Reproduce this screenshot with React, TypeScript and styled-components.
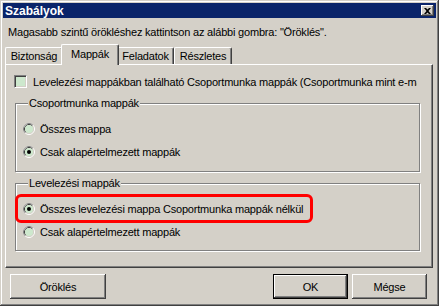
import React from "react";
import styled, { createGlobalStyle } from "styled-components";

const FACE = "#d4d0c8";
const SHADOW = "#808080";
const DARK = "#404040";
const WELL = "#cde8cd";

const Global = createGlobalStyle`
  html, body {
    margin: 0;
    padding: 0;
    background: ${FACE};
  }
  body {
    font-family: "Liberation Sans", Arial, sans-serif;
    font-size: 11px;
    letter-spacing: -0.2px;
    color: #000;
  }
`;

const Window = styled.div`
  box-sizing: border-box;
  width: 439px;
  height: 306px;
  padding: 3px;
  display: flex;
  flex-direction: column;
  background: ${FACE};
  box-shadow: inset -1px -1px ${DARK}, inset 1px 1px ${FACE},
    inset -2px -2px ${SHADOW}, inset 2px 2px #fff;
`;

const TitleBar = styled.div`
  height: 15px;
  display: flex;
  align-items: center;
  justify-content: space-between;
  padding: 0 2px;
  background: #0a246a;
  color: #fff;
  font-weight: bold;
  font-size: 12px;
  letter-spacing: 0;
`;

const CloseButton = styled.div`
  box-sizing: border-box;
  width: 13px;
  height: 11px;
  display: flex;
  align-items: center;
  justify-content: center;
  background: ${FACE};
  box-shadow: inset -1px -1px ${DARK}, inset 1px 1px #fff,
    inset -2px -2px ${SHADOW};
`;

const Body = styled.div`
  flex: 1;
  display: flex;
  flex-direction: column;
  padding: 0 3px 0 2px;
`;

const Hint = styled.div`
  margin: 8px 0 0 3px;
  line-height: 13px;
  white-space: nowrap;
`;

const TabStrip = styled.div`
  margin-top: 4px;
  height: 21px;
  display: flex;
  align-items: flex-end;
`;

const Tab = styled.div<{ $active?: boolean; $w: number }>`
  box-sizing: border-box;
  position: relative;
  width: ${(p) => p.$w}px;
  height: ${(p) => (p.$active ? 21 : 17)}px;
  margin: 0 ${(p) => (p.$active ? -2 : 0)}px ${(p) => (p.$active ? -1 : 0)}px;
  padding-top: ${(p) => (p.$active ? 3 : 2)}px;
  text-align: center;
  background: ${FACE};
  z-index: ${(p) => (p.$active ? 1 : 0)};
  border-radius: 2px 2px 0 0;
  border-top: 1px solid #fff;
  border-left: 1px solid #fff;
  border-right: 1px solid ${DARK};
  box-shadow: inset -1px 0 ${SHADOW};
`;

const Panel = styled.div`
  box-sizing: border-box;
  height: 204px;
  display: flex;
  flex-direction: column;
  padding: 10px 0 0 8px;
  border-top: 1px solid #fff;
  border-left: 1px solid #fff;
  border-right: 1px solid ${DARK};
  border-bottom: 1px solid ${DARK};
  box-shadow: inset -1px -1px ${SHADOW};
`;

const CheckRow = styled.label`
  display: flex;
  align-items: center;
  gap: 6px;
  height: 13px;
  width: 403px;
  white-space: nowrap;
  overflow: hidden;
`;

const CheckBox = styled.span`
  box-sizing: border-box;
  flex: none;
  width: 13px;
  height: 13px;
  background: ${WELL};
  border-top: 1px solid ${SHADOW};
  border-left: 1px solid ${SHADOW};
  border-bottom: 1px solid #fff;
  border-right: 1px solid #fff;
  box-shadow: inset 1px 1px ${DARK}, inset -1px -1px ${FACE};
`;

const Group = styled.fieldset<{ $top: number; $h: number }>`
  box-sizing: border-box;
  margin: ${(p) => p.$top}px 0 0 1px;
  width: 405px;
  height: ${(p) => p.$h}px;
  padding: 12px 0 0 7px;
  border: 1px solid ${SHADOW};
  box-shadow: inset 1px 1px #fff, 1px 1px #fff;
  display: flex;
  flex-direction: column;
  gap: 10px;
  min-width: 0;
`;

const Legend = styled.legend`
  margin-left: 5px;
  padding: 0 1px;
  line-height: 13px;
  background: ${FACE};
`;

const RadioRow = styled.label`
  position: relative;
  display: flex;
  align-items: center;
  gap: 5px;
  height: 13px;
  white-space: nowrap;
`;

const Highlight = styled.span`
  position: absolute;
  left: -8px;
  top: -8px;
  width: 298px;
  height: 29px;
  box-sizing: border-box;
  border: 3px solid #ff0000;
  border-radius: 6px;
  pointer-events: none;
`;

const Footer = styled.div`
  display: flex;
  align-items: center;
  padding: 6px 0 0 5px;
  gap: 4px;
`;

const Button = styled.button<{ $w: number; $default?: boolean }>`
  box-sizing: border-box;
  width: ${(p) => p.$w}px;
  height: 25px;
  padding: 0;
  font: inherit;
  letter-spacing: inherit;
  color: #000;
  background: ${FACE};
  border: ${(p) => (p.$default ? "1px solid #000" : "none")};
  box-shadow: ${(p) =>
    p.$default
      ? `inset -1px -1px ${DARK}, inset 1px 1px #fff, inset -2px -2px ${SHADOW}`
      : `inset -1px -1px ${DARK}, inset 1px 1px #fff, inset -2px -2px ${SHADOW}, inset 2px 2px ${FACE}`};
`;

const Spacer = styled.div`
  flex: 1;
`;

const Radio = ({ checked }: { checked?: boolean }) => (
  <svg width="12" height="12" viewBox="0 0 12 12" style={{ flex: "none" }}>
    <circle cx="6" cy="6" r="5.5" fill="none" stroke="#fff" />
    <path d="M2.11 9.89 A5.5 5.5 0 0 1 9.89 2.11" fill="none" stroke={SHADOW} />
    <circle cx="6" cy="6" r="4.5" fill="none" stroke={FACE} />
    <path d="M2.82 9.18 A4.5 4.5 0 0 1 9.18 2.82" fill="none" stroke={DARK} />
    <circle cx="6" cy="6" r="4" fill={WELL} />
    {checked && <circle cx="6" cy="6" r="2" fill="#000" />}
  </svg>
);

const CloseGlyph = () => (
  <svg width="7" height="6" viewBox="0 0 7 6">
    <path d="M0 0h2l1.5 1.5L5 0h2L4.5 3 7 6H5L3.5 4.5 2 6H0l2.5-3z" fill="#000" />
  </svg>
);

export default function App() {
  return (
    <>
      <Global />
      <Window>
        <TitleBar>
          <span>Szabályok</span>
          <CloseButton>
            <CloseGlyph />
          </CloseButton>
        </TitleBar>
        <Body>
          <Hint>Magasabb szintű örökléshez kattintson az alábbi gombra: "Öröklés".</Hint>
          <TabStrip>
            <Tab $w={58}>Biztonság</Tab>
            <Tab $w={58} $active>
              Mappák
            </Tab>
            <Tab $w={57}>Feladatok</Tab>
            <Tab $w={58}>Részletes</Tab>
          </TabStrip>
          <Panel>
            <CheckRow>
              <CheckBox />
              Levelezési mappákban található Csoportmunka mappák (Csoportmunka mint e-mail)
            </CheckRow>
            <Group $top={9} $h={75}>
              <Legend>Csoportmunka mappák</Legend>
              <RadioRow>
                <Radio />
                Összes mappa
              </RadioRow>
              <RadioRow>
                <Radio checked />
                Csak alapértelmezett mappák
              </RadioRow>
            </Group>
            <Group $top={5} $h={74}>
              <Legend>Levelezési mappák</Legend>
              <RadioRow>
                <Radio checked />
                Összes levelezési mappa Csoportmunka mappák nélkül
                <Highlight />
              </RadioRow>
              <RadioRow>
                <Radio />
                Csak alapértelmezett mappák
              </RadioRow>
            </Group>
          </Panel>
          <Footer>
            <Button $w={96}>Öröklés</Button>
            <Spacer />
            <Button $w={75} $default>
              OK
            </Button>
            <Button $w={75}>Mégse</Button>
            <span style={{ width: 2 }} />
          </Footer>
        </Body>
      </Window>
    </>
  );
}
